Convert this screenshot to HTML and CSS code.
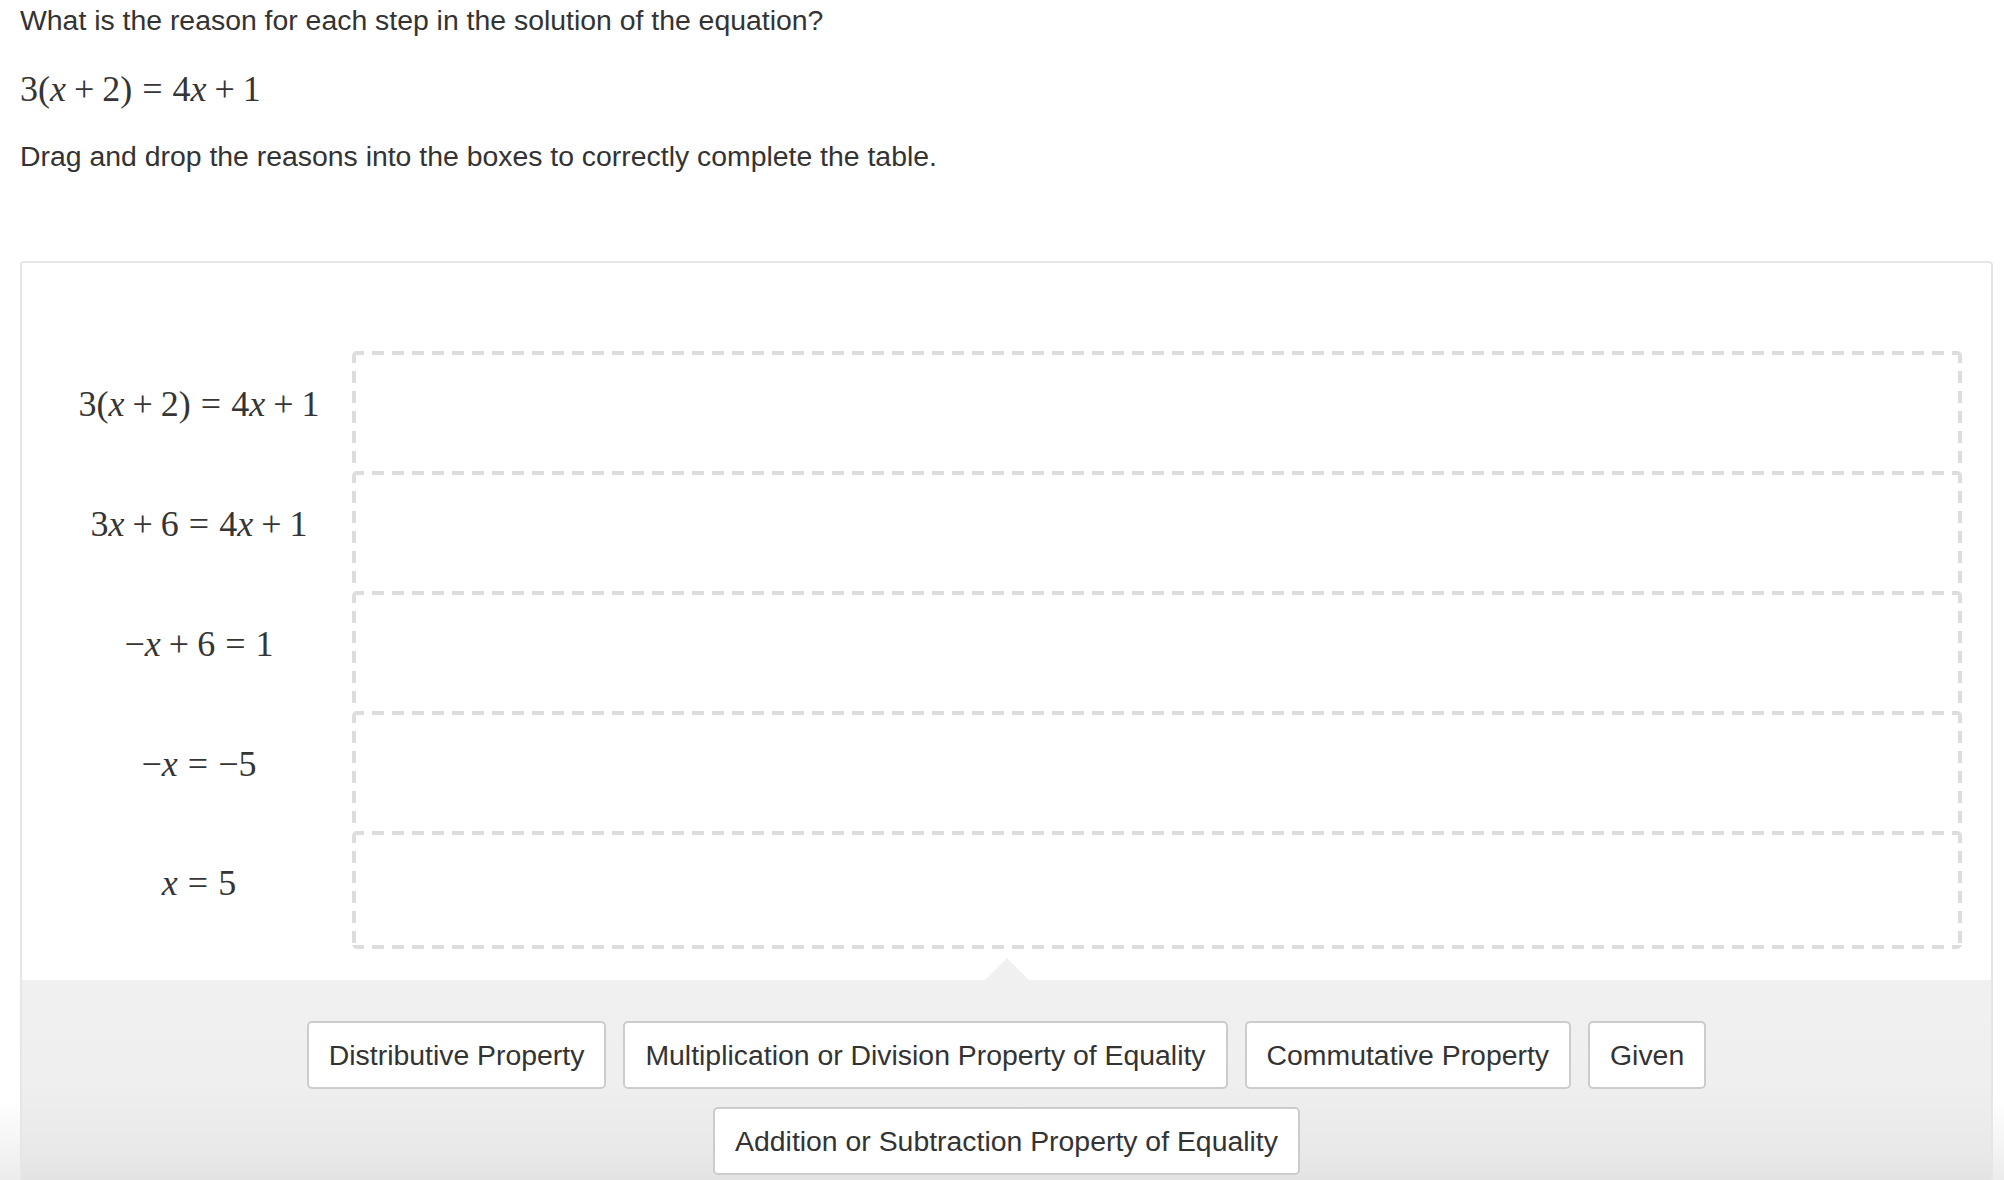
FILE: index.html
```html
<!DOCTYPE html>
<html lang="en">
<head>
<meta charset="utf-8">
<title>Reasons for each step</title>
<link rel="stylesheet" href="styles.css">
</head>
<body>
<main class="page">
  <p class="prompt">What is the reason for each step in the solution of the equation?</p>
  <p class="eq-line"><span class="math">3(<i>x</i><span class="bin">+</span>2)<span class="rel">=</span>4<i>x</i><span class="bin">+</span>1</span></p>
  <p class="prompt prompt-drag">Drag and drop the reasons into the boxes to correctly complete the table.</p>

  <section class="panel">
    <div class="steps">
      <div class="step-label"><span class="math">3(<i>x</i><span class="bin">+</span>2)<span class="rel">=</span>4<i>x</i><span class="bin">+</span>1</span></div>
      <div class="drop"></div>
      <div class="step-label"><span class="math">3<i>x</i><span class="bin">+</span>6<span class="rel">=</span>4<i>x</i><span class="bin">+</span>1</span></div>
      <div class="drop"></div>
      <div class="step-label"><span class="math">−<i>x</i><span class="bin">+</span>6<span class="rel">=</span>1</span></div>
      <div class="drop"></div>
      <div class="step-label"><span class="math">−<i>x</i><span class="rel">=</span>−5</span></div>
      <div class="drop"></div>
      <div class="step-label"><span class="math"><i>x</i><span class="rel">=</span>5</span></div>
      <div class="drop drop-last"></div>
    </div>

    <div class="tray">
      <div class="chip">Distributive Property</div>
      <div class="chip">Multiplication or Division Property of Equality</div>
      <div class="chip">Commutative Property</div>
      <div class="chip">Given</div>
      <div class="chip">Addition or Subtraction Property of Equality</div>
    </div>
  </section>
</main>
</body>
</html>
```

FILE: styles.css
```css
html, body {
  margin: 0;
  padding: 0;
  background: #ffffff;
}

body {
  font-family: "Liberation Sans", Arial, Helvetica, sans-serif;
  color: #333333;
  font-size: 28.4px;
  overflow: hidden;
  height: 1180px;
  background: linear-gradient(#ffffff 0, #ffffff 1100px, #ececec 1180px);
}

.page {
  padding: 0 11px 0 20px;
}

.prompt {
  margin: 0;
  line-height: 40px;
}

.prompt-drag {
  margin-top: 27px;
}

.eq-line {
  margin: 29px 0 0 0;
  height: 40px;
  line-height: 40px;
}

.math {
  font-family: "Liberation Serif", "Times New Roman", serif;
  font-size: 36px;
  line-height: 40px;
  color: #353535;
  white-space: nowrap;
}

.math i {
  font-style: italic;
}

.bin {
  margin: 0 0.222em;
}

.rel {
  margin: 0 0.278em;
}

.panel {
  margin-top: 85px;
  border: 2px solid #e6e6e6;
  border-bottom: none;
  border-radius: 4px 4px 0 0;
  height: 960px;
  display: flex;
  flex-direction: column;
  background: #ffffff;
}

.steps {
  display: grid;
  grid-template-columns: 306px 1fr;
  grid-template-rows: repeat(4, 120px) 118px;
  padding: 88px 29px 31px 24px;
}

.step-label {
  display: flex;
  align-items: center;
  justify-content: center;
  padding-bottom: 14px;
}

.drop {
  border-radius: 5px 5px 0 0;
  background:
    repeating-linear-gradient(90deg, #dddddd 0 12px, transparent 12px 20px) left top / 100% 4px no-repeat,
    repeating-linear-gradient(180deg, #dddddd 0 12px, transparent 12px 20px) left top / 4px 100% no-repeat,
    repeating-linear-gradient(180deg, #dddddd 0 12px, transparent 12px 20px) right top / 4px 100% no-repeat;
}

.drop-last {
  border-radius: 5px;
  background:
    repeating-linear-gradient(90deg, #dddddd 0 12px, transparent 12px 20px) left top / 100% 4px no-repeat,
    repeating-linear-gradient(90deg, #dddddd 0 12px, transparent 12px 20px) left bottom / 100% 4px no-repeat,
    repeating-linear-gradient(180deg, #dddddd 0 12px, transparent 12px 20px) left top / 4px 100% no-repeat,
    repeating-linear-gradient(180deg, #dddddd 0 12px, transparent 12px 20px) right top / 4px 100% no-repeat;
}

.tray {
  position: relative;
  flex: 1;
  display: flex;
  flex-wrap: wrap;
  justify-content: center;
  align-content: flex-start;
  gap: 18px 17px;
  padding: 41px 30px 0;
  background: linear-gradient(#f0f0f0 0, #efefef 100px, #e9e9e9 170px, #e3e3e3 200px);
}

.tray::before {
  content: "";
  position: absolute;
  top: -22px;
  left: calc(50% - 22px);
  border-left: 22px solid transparent;
  border-right: 22px solid transparent;
  border-bottom: 22px solid #f0f0f0;
}

.chip {
  box-sizing: border-box;
  height: 68px;
  line-height: 64px;
  padding: 0 20px;
  border: 2px solid #cccccc;
  border-radius: 5px;
  background: #ffffff;
  color: #333333;
  white-space: nowrap;
}
```
